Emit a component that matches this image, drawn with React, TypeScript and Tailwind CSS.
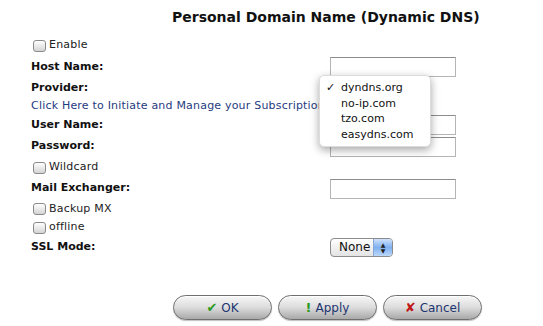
import React from "react";

function Check({ label }: { label: string }) {
  return (
    <div className="flex items-center">
      <span className="w-[13px] h-[12px] rounded-[3px] border border-[#8a8a8a] bg-gradient-to-b from-white to-[#d4d4d4]" />
      <span className="ml-[3px] text-[11px] tracking-[0.2px] text-[#222]">{label}</span>
    </div>
  );
}

function Field() {
  return <div className="w-[126px] h-[20px] border border-[#b5b5b5] border-t-[#8d8d8d] bg-white" />;
}

function Pill({ icon, label }: { icon: React.ReactNode; label: string }) {
  return (
    <div className="w-[99px] h-[25px] rounded-full border border-[#6f6f6f] bg-gradient-to-b from-[#f7f7f7] via-[#dcdcdc] to-[#a9a9a9] shadow-[inset_0_1px_0_#fff,0_1px_1px_rgba(0,0,0,0.25)] flex items-center justify-center gap-[4px] text-[12px] text-[#1d3570]">
      {icon}
      <span>{label}</span>
    </div>
  );
}

export default function App() {
  const rows = "flex items-center";
  return (
    <div className="relative w-[543px] h-[326px] bg-white font-['DejaVu_Sans',Verdana,sans-serif] text-[#111] overflow-hidden">
      <div className="h-[35px] pl-[172px] pt-[7px] text-[14px] font-bold">Personal Domain Name (Dynamic DNS)</div>

      <div className="pl-[33px] flex flex-col">
        <div className={`${rows} h-[21px]`}>
          <Check label="Enable" />
        </div>
        <div className={`${rows} h-[22px] justify-between w-[423px]`}>
          <span className="text-[11px] font-bold -ml-[2px]">Host Name:</span>
          <Field />
        </div>
        <div className={`${rows} h-[20px]`}>
          <span className="text-[11px] font-bold -ml-[2px]">Provider:</span>
        </div>
        <div className={`${rows} h-[17px]`}>
          <span className="text-[11px] tracking-[0.2px] text-[#1f3b80] -ml-[2px] whitespace-nowrap">
            Click Here to Initiate and Manage your Subscription
          </span>
        </div>
        <div className={`${rows} h-[20px] justify-between w-[423px]`}>
          <span className="text-[11px] font-bold -ml-[2px]">User Name:</span>
          <Field />
        </div>
        <div className={`${rows} h-[23px] justify-between w-[423px]`}>
          <span className="text-[11px] font-bold -ml-[2px]">Password:</span>
          <Field />
        </div>
        <div className={`${rows} h-[19px]`}>
          <Check label="Wildcard" />
        </div>
        <div className={`${rows} h-[23px] justify-between w-[423px]`}>
          <span className="text-[11px] font-bold -ml-[2px]">Mail Exchanger:</span>
          <Field />
        </div>
        <div className={`${rows} h-[18px]`}>
          <Check label="Backup MX" />
        </div>
        <div className={`${rows} h-[19px]`}>
          <Check label="offline" />
        </div>
        <div className={`${rows} h-[21px]`}>
          <span className="text-[11px] font-bold -ml-[2px] w-[299px]">SSL Mode:</span>
          <div className="w-[63px] h-[19px] rounded-[4px] border border-[#8c8c8c] bg-gradient-to-b from-white to-[#e3e3e3] flex overflow-hidden">
            <span className="flex-1 pl-[8px] text-[12px] leading-[17px] text-[#111]">None</span>
            <span className="w-[19px] border-l border-[#8aa6d6] bg-gradient-to-b from-[#cfe1fb] via-[#7fb0f0] to-[#bcd8fb] flex flex-col items-center justify-center text-[6px] leading-[6px] text-[#222]">
              <span>▲</span>
              <span>▼</span>
            </span>
          </div>
        </div>
      </div>

      <div className="mt-[37px] pl-[173px] flex gap-[6px]">
        <Pill icon={<span className="text-[#2a9a1e] text-[13px] font-bold">✔</span>} label="OK" />
        <Pill icon={<span className="text-[#2a9a1e] text-[13px] font-black">!</span>} label="Apply" />
        <Pill icon={<span className="text-[#c01818] text-[13px] font-bold">✘</span>} label="Cancel" />
      </div>

      <div className="absolute left-[319px] top-[75px] w-[112px] h-[72px] rounded-[5px] bg-white shadow-[0_3px_8px_rgba(0,0,0,0.35)] border border-[#dcdcdc] pt-[4px] text-[11px] leading-[15.5px] text-[#111]">
        <div className="flex"><span className="w-[21px] pl-[6px]">✓</span>dyndns.org</div>
        <div className="pl-[21px]">no-ip.com</div>
        <div className="pl-[21px]">tzo.com</div>
        <div className="pl-[21px]">easydns.com</div>
      </div>
    </div>
  );
}
